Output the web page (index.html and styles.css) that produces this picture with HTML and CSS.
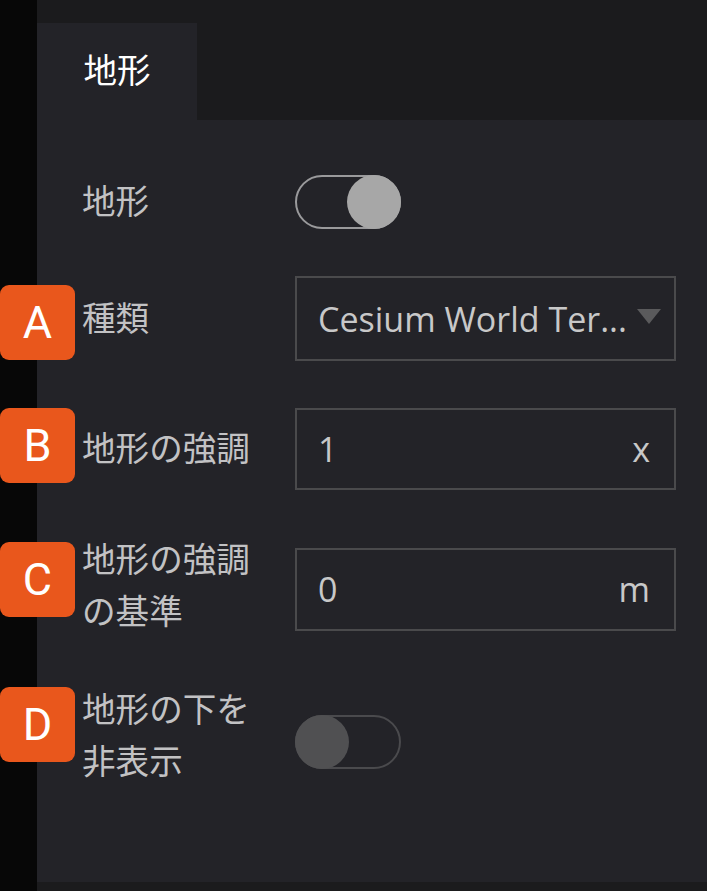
FILE: index.html
```html
<!DOCTYPE html>
<html lang="ja">
<head>
<meta charset="utf-8">
<title>地形</title>
<link rel="stylesheet" href="styles.css">
</head>
<body>
<div class="screen">
  <div class="edge"></div>
  <div class="panel">
    <div class="tabbar">
      <div class="tab">地形</div>
    </div>
    <div class="content">
      <div class="row">
        <div class="label">地形</div>
        <div class="toggle toggle-on"><span class="knob"></span></div>
      </div>
      <div class="row">
        <span class="badge badge-a">A</span>
        <div class="label">種類</div>
        <div class="select">
          <span class="select-text">Cesium World Ter...</span>
          <span class="caret"></span>
        </div>
      </div>
      <div class="row">
        <span class="badge badge-b">B</span>
        <div class="label">地形の強調</div>
        <div class="field">
          <span class="value">1</span>
          <span class="unit">x</span>
        </div>
      </div>
      <div class="row row-c">
        <span class="badge badge-c">C</span>
        <div class="label label-multi">地形の強調の基準</div>
        <div class="field field-tall">
          <span class="value">0</span>
          <span class="unit">m</span>
        </div>
      </div>
      <div class="row row-d">
        <span class="badge badge-d">D</span>
        <div class="label label-multi">地形の下を非表示</div>
        <div class="toggle toggle-off"><span class="knob"></span></div>
      </div>
    </div>
    <div class="footer"></div>
  </div>
</div>
</body>
</html>
```

FILE: styles.css
```css
* {
  box-sizing: border-box;
}

html, body {
  margin: 0;
  padding: 0;
  background: #070707;
}

body {
  font-family: "Noto Sans CJK JP", "Noto Sans", sans-serif;
}

.screen {
  display: flex;
  width: 707px;
  height: 891px;
  overflow: hidden;
}

.edge {
  width: 37px;
  flex: none;
  background: #070707;
}

.panel {
  flex: 1;
  display: flex;
  flex-direction: column;
  background: #232328;
}

.tabbar {
  height: 120px;
  flex: none;
  padding-top: 23px;
  background: #1b1b1d;
  display: flex;
}

.tab {
  width: 160px;
  background: #232328;
  color: #ffffff;
  font-size: 33.6px;
  line-height: 52px;
  display: flex;
  align-items: center;
  justify-content: center;
  padding-bottom: 6px;
}

.content {
  flex: 1;
  padding: 55px 31px 0 45px;
  display: flex;
  flex-direction: column;
  gap: 47px;
}

.row {
  position: relative;
  display: grid;
  grid-template-columns: 185px 381px;
  column-gap: 28px;
  align-items: center;
}

.row-c {
  margin-top: 2px;
}

.row-d {
  margin-top: 3px;
}

.label {
  color: #c2c2c4;
  font-size: 33.6px;
  line-height: 52px;
  margin-top: -4px;
}

.label-multi {
  transform: translateY(-3px);
}

.toggle {
  width: 106px;
  height: 54px;
  border-radius: 27px;
  border: 2px solid #9a9a9c;
  display: flex;
  align-items: center;
}

.toggle .knob {
  width: 54px;
  height: 54px;
  margin: -2px;
  border-radius: 50%;
  flex: none;
}

.toggle-on {
  justify-content: flex-end;
}

.toggle-on .knob {
  background: #a7a7a7;
}

.toggle-off {
  border-color: #4a4a4d;
  justify-content: flex-start;
  margin-top: 6px;
}

.toggle-off .knob {
  background: #505052;
}

.select,
.field {
  border: 2px solid #4a4a4c;
  display: flex;
  align-items: center;
  justify-content: space-between;
  color: #c8c8c8;
  font-family: "Open Sans", "Noto Sans", sans-serif;
  font-size: 34px;
}

.select {
  height: 85px;
  padding: 0 13px 0 21px;
}

.caret {
  width: 0;
  height: 0;
  border-left: 12px solid transparent;
  border-right: 12px solid transparent;
  border-top: 15px solid #5a5a5c;
  margin-top: -4px;
}

.field {
  height: 82px;
  padding: 0 24px 0 21px;
}

.field-tall {
  height: 83px;
}

.badge {
  position: absolute;
  left: -82px;
  width: 75px;
  height: 75px;
  border-radius: 9px;
  background: #e9571c;
  color: #ffffff;
  font-family: "Roboto", "Liberation Sans", sans-serif;
  font-size: 45px;
  display: flex;
  align-items: center;
  justify-content: center;
  z-index: 2;
}

.badge-a { top: 9px; }
.badge-b { top: 0; }
.badge-c { top: 3px; }
.badge-d { top: -2px; }

.footer {
  height: 9px;
  flex: none;
  background: #1b1b1d;
}
```
